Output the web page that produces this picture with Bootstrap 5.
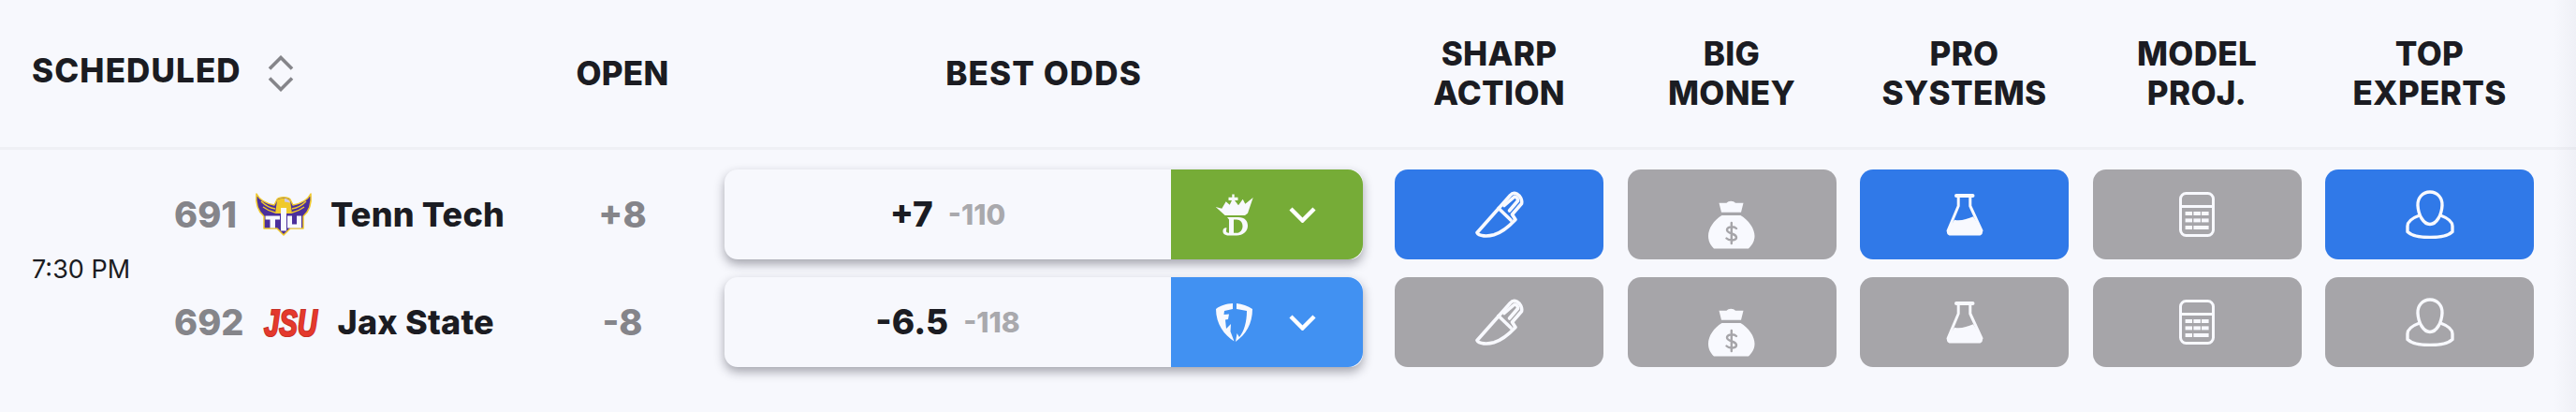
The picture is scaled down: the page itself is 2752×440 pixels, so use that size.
<!doctype html>
<html lang="en">
<head>
<meta charset="utf-8">
<title>Scheduled odds</title>
<link rel="stylesheet" href="https://cdn.jsdelivr.net/npm/bootstrap@5.3.0/dist/css/bootstrap.min.css">
<style>
html,body{height:100%}
body{background:#f7f8fd;color:#1b1c22;font-family:Inter,"Liberation Sans",sans-serif;overflow:hidden}
.slate-page{height:440px;padding-left:34px;position:relative}
.slate-grid{display:grid;grid-template-columns:152px 424px 110px 736px 257px repeat(4,248.5px)}
.slate-head{height:160px;margin-left:-34px;padding-left:34px;padding-bottom:2px;border-bottom:3px solid #eff0f5;align-items:center}
.head-label{font-size:35px;font-weight:800;letter-spacing:.3px;line-height:42px;text-transform:uppercase}
.head-wide{letter-spacing:1.1px}
.head-sched{grid-column:span 2;margin-top:-6px}
.sort-ico{width:28px;height:39px;margin-left:28px;margin-top:7px}
.head-odds{width:682px;justify-self:end}
.head-act{width:223px;justify-self:end}
.slate-body{padding-top:21px;row-gap:19px;grid-template-rows:96px 96px}
.game-time{grid-row:span 2;font-size:27px;line-height:1;margin-top:2px}
.team-row{gap:20px}
.rot-num{font-size:38px;font-weight:800;color:#85858a}
.team-name{font-size:36px;font-weight:800;letter-spacing:.2px}
.team-logo{width:60px;height:46px;overflow:visible}
.open-line{font-size:38px;font-weight:800;color:#85858a}
.odds-wrap{width:682px;justify-self:end;border-radius:14px;box-shadow:0 5px 11px rgba(30,30,45,.38)}
.odds-main{width:477px;gap:16px}
.odds-line{font-size:37px;font-weight:800}
.odds-juice{font-size:30px;font-weight:800;color:#a9a9ad}
.odds-book{width:205px;gap:38px;padding-right:4px}
.book-dk{background:#76ac37}
.book-fd{background:#4191f2}
.book-ico{width:41px;height:45px}
.chev-ico{width:29px;height:17px}
.act-btn{width:223px;justify-self:end;border-radius:14px;color:#f8f9fe}
.act-on{background:#3079e8}
.act-off{background:#a6a5a9}
.act-ico{width:52px;height:52px}
.bag-ico{width:52px;height:74px}
.edge-fade{position:absolute;top:0;right:0;bottom:0;width:24px;background:linear-gradient(to right,rgba(60,60,90,0),rgba(60,60,90,.045));pointer-events:none}
</style>
</head>
<body>
<svg class="d-none" xmlns="http://www.w3.org/2000/svg">
  <symbol id="i-knife" viewBox="0 0 52 52">
    <g transform="translate(0,2)" fill="none" stroke="currentColor" stroke-width="3.6" stroke-linejoin="round" stroke-linecap="round">
      <path d="M2 43.500 37.500 3.500C39.500 1 42.500 1 44.500 2 48 4 50.500 8.500 49.500 12.500L39.500 24 43 29.500C36 37 29 43 20 45.800 13 47.800 4 47.500 2 43.500Z"/>
      <path d="M25 17.500 38 30"/>
      <path d="M31 14.500 41.500 5.500C43 4 46 7 45.500 9.500L36.500 20"/>
    </g>
  </symbol>
  <symbol id="i-bag" viewBox="0 -22 52 74">
    <path fill="currentColor" d="M12.500 2.700H20.500C22.500 0 28 0 30 2.700H38.500L36 12.700H15ZM15.500 16H35.500C44 21 50.500 30 50.500 38 50.500 44 47.500 48 44 51.500H7C3.500 48 1 44 1 38 1 30 7 21 15.500 16Z"/>
    <path d="M25.800 24V46M31 30C28 27 21 28 21 31.500 21 36 31 35 31 39.500 31 43 23.500 43.500 20.500 40.500" fill="none" stroke="#a6a5a9" stroke-width="2.400" stroke-linecap="round"/>
  </symbol>
  <symbol id="i-flask" viewBox="0 0 52 52">
    <g transform="translate(6.500,4)">
      <path fill="currentColor" d="M8.500 27.700C14 29.500 22 27 28.500 24.300L37.800 39C39.500 42 37.500 44.500 35 44.500H4C1.500 44.500-.5 42 1 39Z"/>
      <path fill="none" stroke="currentColor" stroke-width="3" stroke-linejoin="round" stroke-linecap="round" d="M12.700 2.500V13L1.500 39.500M25.300 2.500V13L37.500 39.500"/>
      <path fill="none" stroke="currentColor" stroke-width="4" stroke-linecap="round" d="M10.500 2H28"/>
    </g>
  </symbol>
  <symbol id="i-calc" viewBox="0 0 52 52">
    <g transform="translate(7,2)">
      <rect x="1.500" y="1.500" width="35" height="45" rx="6" fill="none" stroke="currentColor" stroke-width="3"/>
      <path d="M1.500 15.500H36.500" stroke="currentColor" stroke-width="3"/>
      <g fill="currentColor">
        <rect x="6.600" y="21" width="7.400" height="4"/><rect x="15.400" y="21" width="7.500" height="4"/><rect x="24" y="21" width="7.600" height="4"/>
        <rect x="6.600" y="28.400" width="7.400" height="4"/><rect x="15.400" y="28.400" width="7.500" height="4"/><rect x="24" y="28.400" width="7.600" height="4"/>
        <rect x="6.600" y="36" width="7.400" height="4"/><rect x="15.400" y="36" width="16.200" height="4"/>
      </g>
    </g>
  </symbol>
  <symbol id="i-person" viewBox="0 0 52 52">
    <g fill="none" stroke="currentColor" stroke-width="3.4" stroke-linejoin="round">
      <path d="M26 2C34 2 39.500 8.500 39 16.500 38.500 26.500 33 36.500 26 36.500 19 36.500 13.500 26.500 13 16.500 12.500 8.500 18 2 26 2Z"/>
      <path d="M14.800 27C8 29.500 2 33 2 38.500V44.500C6 48.500 16 50.500 26 50.500 36 50.500 46 48.500 50 44.500V38.500C50 33 44 29.500 37.200 27"/>
    </g>
  </symbol>
  <symbol id="i-chev" viewBox="0 0 29 17">
    <path d="M2 2 14.500 14.500 27 2" fill="none" stroke="currentColor" stroke-width="4.400"/>
  </symbol>
</svg>

<div class="slate-page">
  <div class="slate-grid slate-head">
    <div class="head-sched d-flex align-items-center">
      <span class="head-label head-wide">Scheduled</span>
      <svg class="sort-ico" viewBox="0 0 28 39" fill="none" stroke="#85858a" stroke-width="3.600">
        <path d="M2 14.500 14 2.500 26 14.500"/><path d="M2 24.500 14 36.500 26 24.500"/>
      </svg>
    </div>
    <div class="head-label text-center">Open</div>
    <div class="head-label head-wide head-odds text-center">Best Odds</div>
    <div class="head-label head-act text-center">Sharp<br>Action</div>
    <div class="head-label head-act text-center">Big<br>Money</div>
    <div class="head-label head-act text-center">Pro<br>Systems</div>
    <div class="head-label head-act text-center">Model<br>Proj.</div>
    <div class="head-label head-act text-center">Top<br>Experts</div>
  </div>

  <div class="slate-grid slate-body">
    <div class="game-time d-flex align-items-center">7:30 PM</div>

    <div class="d-flex align-items-center team-row">
      <span class="rot-num">691</span>
      <svg class="team-logo" viewBox="0 0 60 46">
        <path fill="#4b2f9b" stroke="#f0c92c" stroke-width="1.500" stroke-linejoin="round" d="M1 1C4 7 10 11 20 13L23 7C25 4 35 4 37 7L40 13C50 11 56 7 59 1 60 11 57 20 51 25V38H37L30 45 23 38H9V25C3 20 0 11 1 1Z"/>
        <g fill="none" stroke="#f0c92c" stroke-width="1.400">
          <path d="M6 9C10 13 15 16 21 17M8 15C12 18 16 20 21 21M52 15C48 18 44 20 39 21M54 9C50 13 45 16 39 17"/>
        </g>
        <path fill="#f0c92c" d="M23 8C25 5 35 5 37 8L39 22H21Z"/>
        <path fill="#cfc9ea" d="M31 6C34 6.500 36.500 8 37 10.500L31 9.500Z"/>
        <path fill="#f8f9fe" d="M27 16H33V40.500H27ZM10.500 24.500H26V28.500H21V37.500H15.500V28.500H10.500ZM34 24.500H39V33.500H44V24.500H49V37.500H34Z"/>
      </svg>
      <span class="team-name">Tenn Tech</span>
    </div>
    <div class="d-flex align-items-center justify-content-center open-line">+8</div>
    <div class="odds-wrap d-flex">
      <div class="odds-main d-flex align-items-center justify-content-center">
        <span class="odds-line">+7</span><span class="odds-juice">-110</span>
      </div>
      <div class="odds-book book-dk d-flex align-items-center justify-content-center text-white rounded-end-4">
        <svg class="book-ico" viewBox="0 0 41 45" fill="#f8f9fe">
          <path d="M.7 14 7.300 15.700 11.700 8.300 15.700 11.700 18 7H14.500V3.700H18.300V.5H20.700V3.700H24.500V7H21L25 12.300 29.700 5.700 32.300 10.700 40.700 4 35 20.700 32 23H10.700Z"/>
          <path fill-rule="evenodd" d="M13 25H25C32 25 35 29 35 34 35 40 30 44.500 23 44.500H15C10 44.500 8 42 8.500 39 9 37 10.500 36 12.500 36.500L12 39C11.500 40.500 13 42 15 41.800V27.500ZM20 27.500V41.800H23C27 41.800 29.500 38.500 29.500 34.500 29.500 30.500 27 27.500 23 27.500Z"/>
        </svg>
        <svg class="chev-ico"><use href="#i-chev"/></svg>
      </div>
    </div>
    <div class="act-btn act-on d-flex align-items-center justify-content-center"><svg class="act-ico"><use href="#i-knife"/></svg></div>
    <div class="act-btn act-off d-flex align-items-center justify-content-center"><svg class="bag-ico"><use href="#i-bag"/></svg></div>
    <div class="act-btn act-on d-flex align-items-center justify-content-center"><svg class="act-ico"><use href="#i-flask"/></svg></div>
    <div class="act-btn act-off d-flex align-items-center justify-content-center"><svg class="act-ico"><use href="#i-calc"/></svg></div>
    <div class="act-btn act-on d-flex align-items-center justify-content-center"><svg class="act-ico"><use href="#i-person"/></svg></div>

    <div class="d-flex align-items-center team-row">
      <span class="rot-num">692</span>
      <svg class="team-logo" viewBox="0 0 60 46">
        <text x="1" y="38" textLength="57" lengthAdjust="spacingAndGlyphs" font-family="Liberation Sans,sans-serif" font-style="italic" font-weight="700" font-size="40" fill="#e4392d" stroke="#c62f26" stroke-width="2.200" paint-order="stroke">JSU</text>
      </svg>
      <span class="team-name">Jax State</span>
    </div>
    <div class="d-flex align-items-center justify-content-center open-line">-8</div>
    <div class="odds-wrap d-flex">
      <div class="odds-main d-flex align-items-center justify-content-center">
        <span class="odds-line">-6.5</span><span class="odds-juice">-118</span>
      </div>
      <div class="odds-book book-fd d-flex align-items-center justify-content-center text-white rounded-end-4">
        <svg class="book-ico" viewBox="0 0 41 45">
          <path fill="#f8f9fe" d="M1 8C6 4 12 2.500 19 2V8L10 10 9.500 14 15 13.500 14 19 11 19.500 12 29 17 24 16.500 32 20.500 42.500C10 36 1 24 1 8ZM23 2C29 2.500 35 4.500 40 8 40 24 33 35 22 43L23.500 34 26 38C31 32 34 22 34 10L26 8.500 23 8Z"/>
        </svg>
        <svg class="chev-ico"><use href="#i-chev"/></svg>
      </div>
    </div>
    <div class="act-btn act-off d-flex align-items-center justify-content-center"><svg class="act-ico"><use href="#i-knife"/></svg></div>
    <div class="act-btn act-off d-flex align-items-center justify-content-center"><svg class="bag-ico"><use href="#i-bag"/></svg></div>
    <div class="act-btn act-off d-flex align-items-center justify-content-center"><svg class="act-ico"><use href="#i-flask"/></svg></div>
    <div class="act-btn act-off d-flex align-items-center justify-content-center"><svg class="act-ico"><use href="#i-calc"/></svg></div>
    <div class="act-btn act-off d-flex align-items-center justify-content-center"><svg class="act-ico"><use href="#i-person"/></svg></div>
  </div>
  <div class="edge-fade"></div>
</div>
</body>
</html>
